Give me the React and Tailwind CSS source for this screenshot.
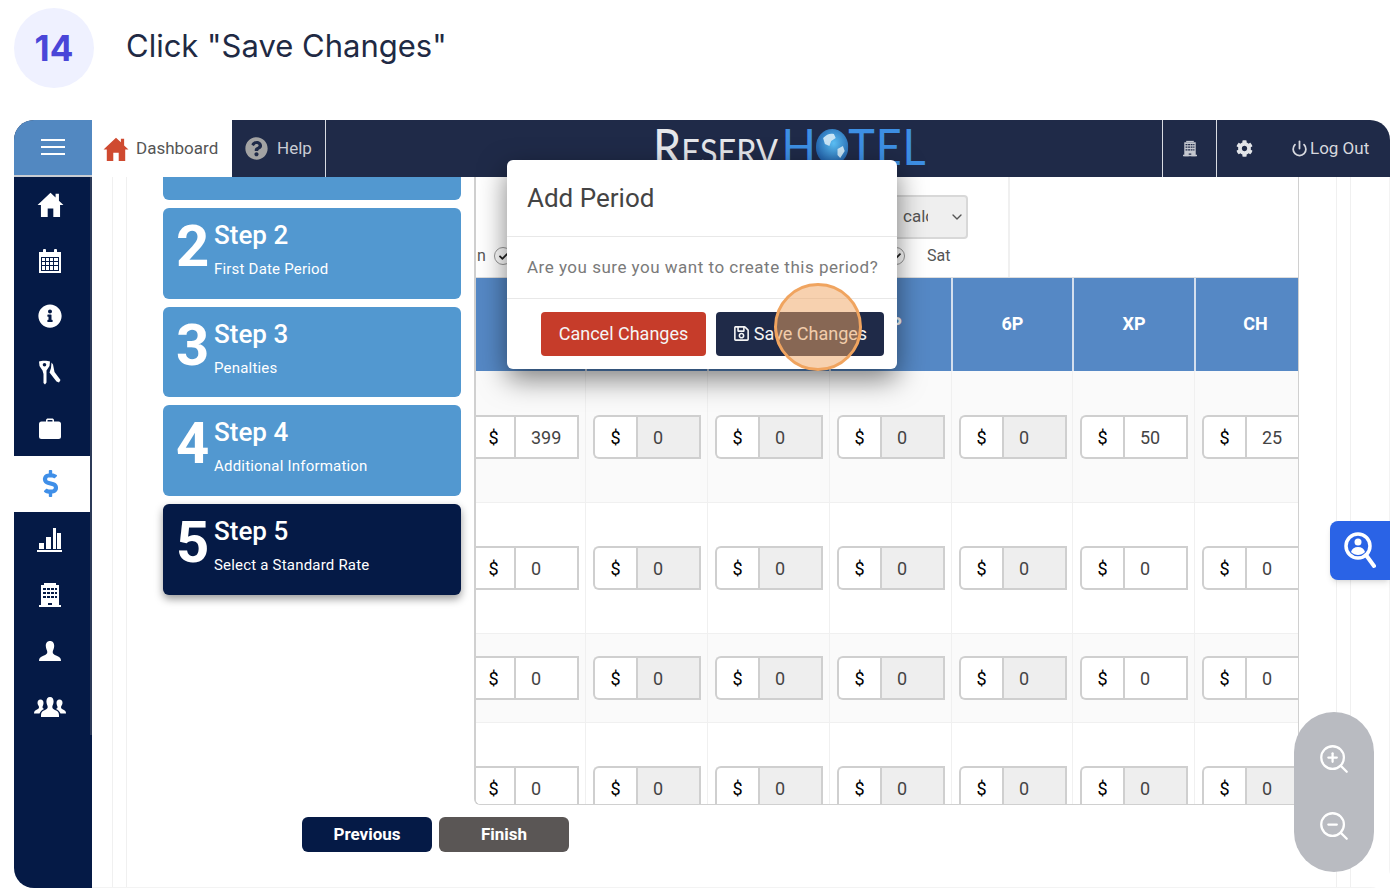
import { ChevronDown, Power, ZoomIn, ZoomOut } from 'lucide-react';
import { FaCheck, FaCog, FaDollarSign, FaInfoCircle, FaQuestionCircle, FaRegSave } from 'react-icons/fa';

const steps = [
  { n: 2, title: 'Step 2', sub: 'First Date Period', h: 'h-[91px]' },
  { n: 3, title: 'Step 3', sub: 'Penalties', h: 'h-[90px]' },
  { n: 4, title: 'Step 4', sub: 'Additional Information', h: 'h-[91px]' },
  { n: 5, title: 'Step 5', sub: 'Select a Standard Rate', h: 'h-[91px]', active: true },
];

const cols = ['2P', '3P', '4P', '5P', '6P', 'XP', 'CH'];

const rows = [
  { h: 'h-[132px]', pt: 'pt-[44px]', bg: 'bg-[#fafafa]', values: ['399', '0', '0', '0', '0', '50', '25'], grey: [1, 2, 3, 4] },
  { h: 'h-[131px]', pt: 'pt-[43px]', bg: 'bg-white', values: ['0', '0', '0', '0', '0', '0', '0'], grey: [1, 2, 3, 4] },
  { h: 'h-[89px]', pt: 'pt-[22px]', bg: 'bg-[#fafafa]', values: ['0', '0', '0', '0', '0', '0', '0'], grey: [1, 2, 3, 4] },
  { h: 'h-[82px]', pt: 'pt-[43px]', bg: 'bg-white', values: ['0', '0', '0', '0', '0', '0', '0'], grey: [1, 2, 3, 4, 5, 6] },
];

function HouseIcon({ size = 26, color = 'white' }) {
  return (
    <svg width={size} height={size} viewBox="0 0 24 24" fill={color}>
      <path d="M12 1.500L0.500 12.500H3.500V23H9.500V15.500H14.500V23H20.500V12.500H23.500L19.500 8.700V2.500H16.500V5.800z" />
    </svg>
  );
}

function CalendarIcon() {
  return (
    <svg width="22" height="24" viewBox="0 0 22 24" fill="white">
      <rect x="4" y="0" width="3" height="5" rx="1" />
      <rect x="15" y="0" width="3" height="5" rx="1" />
      <path d="M0 3h22v21H0z" />
      <path d="M2 8h18v14H2z" fill="#051a46" />
      <path d="M3 9h3v3H3zM7 9h3v3H7zM11 9h3v3h-3zM15 9h4v3h-4zM3 13h3v3H3zM7 13h3v3H7zM11 13h3v3h-3zM15 13h4v3h-4zM3 17h3v4H3zM7 17h3v4H7zM11 17h3v4h-3zM15 17h4v4h-4z" />
    </svg>
  );
}

function KeysIcon() {
  return (
    <svg width="22" height="25" viewBox="0 0 22 25" fill="white">
      <path fillRule="evenodd" d="M0 1.500C2 0.500 9 0.500 11 1.500L10.500 6 7.500 10.500V22.500L6 24.500 4.500 23V14L3.500 10.500 0.500 6zM5.500 3a1.800 1.800 0 100 3.600 1.800 1.800 0 000-3.600z" />
      <path d="M12.500 2.500L14 4.500 15.500 12 21.500 20 20 22.500 17.500 21.500 10.500 12.500 12 8z" />
    </svg>
  );
}

function CaseIcon() {
  return (
    <svg width="22" height="21" viewBox="0 0 22 21" fill="white">
      <path d="M7 4V2.500C7 1 8 0.500 9 0.500h4c1 0 2 0.500 2 2V4h-1.500V2.500C13.500 2 13 2 12.500 2h-3C9 2 8.500 2 8.500 2.500V4z" />
      <rect x="0" y="3.500" width="22" height="17.500" rx="2.500" />
    </svg>
  );
}

function BarsIcon() {
  return (
    <svg width="26" height="24" viewBox="0 0 26 24" fill="white">
      <path d="M0 22h25v2H0zM2 15h5v6H2zM9 9h5v12H9zM16 0h3v21h-3zM20 5h4v16h-4z" />
    </svg>
  );
}

function BuildingIcon({ color = 'white', bg = '#051a46', w = 22, h = 24 }) {
  return (
    <svg width={w} height={h} viewBox="0 0 22 24" fill={color}>
      <path d="M2 2h18v22h-7v-4H9v4H2z" />
      <path d="M0 22h22v2H0z" />
      <rect x="5" y="0" width="12" height="2" />
      <path d="M4 5h3v2H4zM8 5h3v2H8zM12 5h3v2h-3zM16 5h2v2h-2zM4 9h3v2H4zM8 9h3v2H8zM12 9h3v2h-3zM16 9h2v2h-2zM4 13h3v2H4zM8 13h3v2H8zM12 13h3v2h-3zM16 13h2v2h-2z" fill={bg} />
    </svg>
  );
}

function UserIcon() {
  return (
    <svg width="22" height="20" viewBox="0 0 22 20" fill="white">
      <path d="M11 0c3 0 4.200 2.300 4.200 5S13.700 9.500 13.700 11c0 1.800 1 2.600 4 3.800 3 1.200 4.300 2.200 4.300 5.200H0c0-3 1.300-4 4.300-5.200 3-1.200 4-2 4-3.800 0-1.500-1.500-3.300-1.500-6S8 0 11 0z" />
    </svg>
  );
}

function GroupIcon() {
  return (
    <svg width="32" height="20" viewBox="0 0 32 20" fill="white">
      <path d="M6.500 2.500c2 0 3 1.500 3 3.500S8.500 9 8.500 10c0 1 .5 1.500 1.500 2-2 1-3.500 2-4.500 4.500H0c0-2.500 1-3 3-4 1.500-.7 2-1.300 2-2.500S3.500 8 3.500 6s1-3.500 3-3.500z" />
      <path d="M25.500 2.500c-2 0-3 1.500-3 3.500s1 3 1 4c0 1-.5 1.500-1.500 2 2 1 3.500 2 4.500 4.500H32c0-2.500-1-3-3-4-1.500-.7-2-1.300-2-2.500s1.500-2 1.500-4-1-3.500-3-3.500z" />
      <path d="M16 0c2.500 0 3.600 2 3.600 4.500S18.300 8.500 18.300 10c0 1.500 1 2.300 3.200 3.300 2.300 1 3.500 2.200 3.500 5V20H7v-1.700c0-2.800 1.200-4 3.500-5 2.200-1 3.200-1.800 3.200-3.300 0-1.500-1.300-3-1.300-5.500S13.500 0 16 0z" />
    </svg>
  );
}

function FinderIcon() {
  return (
    <svg width="32" height="38" viewBox="0 0 32 38" fill="none">
      <circle cx="14" cy="14" r="12" stroke="white" strokeWidth="3.500" />
      <circle cx="14" cy="10" r="3.500" fill="white" />
      <path d="M7 20c1-3.500 3.500-5 7-5s6 1.500 7 5c-2 2-4.500 3-7 3s-5-1-7-3z" fill="white" />
      <path d="M22 23l8 11" stroke="white" strokeWidth="4" strokeLinecap="round" />
    </svg>
  );
}

const navItems = [
  <HouseIcon key="home" size={27} />,
  <CalendarIcon key="calendar" />,
  <FaInfoCircle key="info" size={24} color="white" />,
  <KeysIcon key="keys" />,
  <CaseIcon key="case" />,
  <FaDollarSign key="dollar" size={27} color="#3f8fe8" />,
  <BarsIcon key="bars" />,
  <BuildingIcon key="building" />,
  <UserIcon key="user" />,
  <GroupIcon key="users" />,
];

function PriceInput({ value, grey, first }) {
  return (
    <div className={`flex h-[44px] w-[108px] shrink-0 text-[18px] ${first ? '-ml-[5px]' : ''}`}>
      <div className="flex w-[43px] shrink-0 items-center justify-center rounded-l-md border-2 border-r-0 border-[#cfcfcf] bg-white text-black">$</div>
      <div className={`flex flex-1 items-center border-2 border-[#cfcfcf] pl-[15px] text-[#444] ${grey ? 'bg-[#eeeeee]' : 'bg-white'}`}>{value}</div>
    </div>
  );
}

function StepCard({ step }) {
  return (
    <div className={`flex rounded-md pl-[13px] text-white ${step.h} ${step.active ? 'bg-[#051a46] shadow-[0_4px_8px_rgba(0,0,0,0.4)]' : 'bg-[#5298d0]'}`}>
      <div className="w-[38px] pt-[3px] text-[58px] leading-[70px] font-bold">{step.n}</div>
      <div className="pt-[9px]">
        <div className="text-[26px] leading-[36px] font-medium">{step.title}</div>
        <div className="mt-[6px] text-[15px] leading-[20px] tracking-[0.2px]">{step.sub}</div>
      </div>
    </div>
  );
}

export default function App() {
  return (
    <div className="h-[896px] w-[1398px] overflow-hidden bg-white font-['Roboto',sans-serif]">
      {/* Step title */}
      <div className="flex h-[120px] items-start gap-[32px] pl-[14px] pt-[8px]">
        <div className="flex h-[80px] w-[80px] items-center justify-center rounded-full bg-[#eff1ff] font-['Inter',sans-serif] text-[35px] font-bold text-[#4a46d8]">14</div>
        <div className="pt-[15px] font-['Inter',sans-serif] text-[31px] leading-[46px] text-[#1f2a44]">Click "Save Changes"</div>
      </div>

      {/* App frame */}
      <div className="relative ml-[14px] h-[768px] w-[1376px] overflow-hidden rounded-[20px]">
        {/* Header */}
        <div className="flex h-[57px] bg-[#1f2a48]">
          <div className="flex h-[55px] w-[78px] shrink-0 items-center justify-center bg-[#5288c1]">
            <div className="flex w-[24px] flex-col gap-[5px] pb-[2px]">
              <div className="h-[2px] bg-white" />
              <div className="h-[2px] bg-white" />
              <div className="h-[2px] bg-white" />
            </div>
          </div>
          <div className="flex w-[140px] shrink-0 items-center bg-white pl-[11px] text-[17px] text-[#555]">
            <HouseIcon size={26} color="#cf4a30" />
            <span className="ml-[7px]">Dashboard</span>
          </div>
          <div className="flex w-[94px] shrink-0 items-center border-r border-[#d8dbe2] pl-[13px] text-[17px] text-[#c9ccd4]">
            <FaQuestionCircle size={23} color="#a3a3a3" />
            <span className="ml-[9px]">Help</span>
          </div>
          <div className="flex flex-1 overflow-hidden pl-[327px]">
            <div className="-mt-[3px] flex origin-left scale-x-[0.9] items-baseline font-['Lato',sans-serif] text-[50px] leading-[58px] font-normal whitespace-nowrap">
              <span className="text-[#e6e8ec]">R</span>
              <span className="text-[36px] text-[#e6e8ec]">ESERV</span>
              <span className="ml-[4px] text-[#3d8fe4]">H</span>
              <svg width="36" height="36" viewBox="0 0 36 36" className="self-center">
                <defs>
                  <radialGradient id="globe" cx="0.55" cy="0.4" r="0.7">
                    <stop offset="0" stopColor="#5cc0f5" />
                    <stop offset="1" stopColor="#16509e" />
                  </radialGradient>
                </defs>
                <circle cx="18" cy="18" r="18" fill="url(#globe)" />
                <path d="M8 9c4-4 8-5 12-4l2 4-5 3-2 5-5-2zM24 20l6-3 2 5-5 7-3-3z" fill="#c8e4f5" />
              </svg>
              <span className="tracking-[1px] text-[#3d8fe4]">TEL</span>
            </div>
          </div>
          <div className="flex w-[55px] shrink-0 items-center justify-center border-x border-[#d8dbe2]">
            <BuildingIcon color="#c4c7cf" bg="#1f2a48" w={14} h={17} />
          </div>
          <div className="flex w-[173px] shrink-0 items-center pl-[19px] text-[17px] text-[#d6d8de]">
            <FaCog size={17} color="#e2e4e8" />
            <Power size={17} strokeWidth={2.5} className="ml-[38px]" />
            <span className="ml-[2px]">Log Out</span>
          </div>
        </div>

        <div className="flex h-[711px] border-r border-b border-[#f3f3f3]">
          {/* Sidebar */}
          <div className="-mt-[2px] h-[713px] w-[78px] shrink-0 border-t-2 border-[#c8ccd2] bg-[#051a46]">
            <div className="flex h-[558px] flex-col border-r-2 border-[#2c3a58]">
              {navItems.map((icon, i) => (
                <div key={i} className={`flex h-[55.8px] items-center justify-center pr-[4px] ${i === 5 ? 'bg-white' : ''}`}>
                  {icon}
                </div>
              ))}
            </div>
          </div>

          {/* Content */}
          <div className="flex-1 pl-[20px] pr-[39px]">
            <div className="h-full border-x border-[#f0f0f0] pl-[13px] pr-[13px]">
              <div className="h-full border-x border-[#f0f0f0] pl-[36px] pr-[37px]">
                <div className="flex h-[628px] gap-[13px]">
                  {/* Wizard steps */}
                  <div className="flex w-[298px] shrink-0 flex-col gap-[8px]">
                    <div className="h-[23px] rounded-b-md bg-[#5298d0]" />
                    {steps.map((step) => (
                      <StepCard key={step.n} step={step} />
                    ))}
                  </div>

                  {/* Rates table */}
                  <div className="w-[825px] overflow-hidden rounded-bl-md border-r border-b border-l-2 border-[#d0d0d0]">
                    <div className="flex h-[100px] flex-col text-[16px] text-[#555]">
                      <div className="mt-[18px] flex h-[44px]">
                        <div className="ml-[322px] h-[44px] w-[170px] overflow-hidden rounded border-2 border-[#d8d8d8] bg-[#efefef]">
                          <div className="flex h-full items-center pl-[103px]">
                            <span className="w-[25px] overflow-hidden text-[17px] whitespace-nowrap">calc</span>
                            <ChevronDown size={16} className="ml-[21px] shrink-0" />
                          </div>
                        </div>
                        <div className="-mt-[18px] ml-[40px] h-[100px] border-l-2 border-[#f0f0f0]" />
                      </div>
                      <div className="mt-[5px] flex items-center">
                        <span className="ml-[1px] w-[17px]">n</span>
                        <span className="flex h-[18px] w-[18px] items-center justify-center rounded-full border border-[#999]">
                          <FaCheck size={9} color="#222" />
                        </span>
                        <span className="ml-[375px] flex h-[18px] w-[18px] items-center justify-center rounded-full border border-[#999]">
                          <FaCheck size={9} color="#222" />
                        </span>
                        <span className="ml-[22px]">Sat</span>
                      </div>
                    </div>

                    <div className="grid h-[94px] grid-cols-[111px_122px_122px_122px_121px_122px_1fr] border-t border-[#ddd] bg-[#5588c5] text-[18px] font-bold text-white">
                      {cols.map((col, i) => (
                        <div key={col} className={`flex items-center justify-center pb-[2px] ${i < 6 ? 'border-r-2 border-[#d4dfee]' : 'pl-[17px]'}`}>
                          {col}
                        </div>
                      ))}
                    </div>

                    {rows.map((row, r) => (
                      <div key={r} className={`grid grid-cols-[110px_122px_122px_122px_121px_122px_1fr] overflow-hidden border-b border-[#f0f0f0] ${row.h} ${row.bg}`}>
                        {row.values.map((value, i) => (
                          <div key={i} className={`${row.pt} ${i === 0 ? '' : 'pl-[7px]'} border-r border-[#f0f0f0]`}>
                            <PriceInput value={value} grey={row.grey.includes(i)} first={i === 0} />
                          </div>
                        ))}
                      </div>
                    ))}
                  </div>
                </div>

                {/* Wizard buttons */}
                <div className="mt-[12px] flex gap-[7px] pl-[139px] text-[17px] font-bold text-white">
                  <div className="flex h-[35px] w-[130px] items-center justify-center rounded-md bg-[#051a46]">Previous</div>
                  <div className="flex h-[35px] w-[130px] items-center justify-center rounded-md bg-[#5a5655]">Finish</div>
                </div>
              </div>
            </div>
          </div>
        </div>

        {/* Confirm dialog */}
        <div className="absolute left-[493px] top-[40px] h-[209px] w-[390px] rounded-md bg-white shadow-[0_10px_28px_rgba(0,0,0,0.5)]">
          <div className="flex h-[77px] items-center border-b border-[#e8e8e8] pl-[20px] text-[26px] text-[#444]">Add Period</div>
          <div className="flex h-[62px] items-center border-b border-[#e8e8e8] pl-[20px] pt-[1px] text-[17px] tracking-[0.5px] text-[#7a7a7a]">Are you sure you want to create this period?</div>
          <div className="flex justify-end gap-[10px] pr-[13px] pt-[13px] text-[18px] text-[#f5f5f5]">
            <div className="flex h-[44px] w-[165px] items-center justify-center rounded pb-[2px] bg-[#c63c2a]">Cancel Changes</div>
            <div className="flex h-[44px] w-[168px] items-center justify-center gap-[4px] rounded pb-[2px] bg-[#1f2a48]">
              <FaRegSave size={17} />
              Save Changes
            </div>
          </div>
        </div>

        {/* Click highlight */}
        <div className="absolute left-[760px] top-[163px] h-[88px] w-[88px] rounded-full border-[3px] border-[#f0a45f] bg-[#f0a45f]/50" />

        {/* Floating tools */}
        <div className="absolute left-[1316px] top-[401px] flex h-[59px] w-[60px] items-center justify-center rounded-l-lg bg-[#2a63e6] shadow-md">
          <FinderIcon />
        </div>
        <div className="absolute left-[1280px] top-[592px] flex h-[160px] w-[80px] flex-col items-center gap-[33px] rounded-full bg-[#b9bbc1] pt-[30px]">
          <ZoomIn size={34} color="white" strokeWidth={1.6} />
          <ZoomOut size={34} color="white" strokeWidth={1.6} />
        </div>
      </div>
    </div>
  );
}
